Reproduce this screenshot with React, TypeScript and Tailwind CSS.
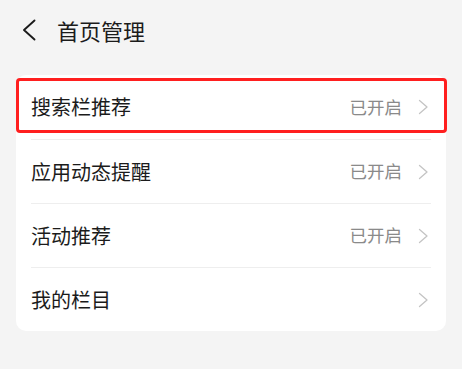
const items = [
  { label: "搜索栏推荐", status: "已开启", highlight: true },
  { label: "应用动态提醒", status: "已开启" },
  { label: "活动推荐", status: "已开启" },
  { label: "我的栏目", status: "" },
]

export default function App() {
  return (
    <div
      className="w-[462px] h-[369px] bg-[#f4f4f4] overflow-hidden"
      style={{ fontFamily: '"Noto Sans CJK SC", "Noto Sans", sans-serif' }}
    >
      <div className="flex items-center h-[60px] pl-[22px]">
        {/* back arrow */}
        <svg width="14" height="22" viewBox="0 0 14 22" fill="none" className="text-[#1b1b1b]">
          <path d="M12.5 1.5 2 11l10.5 9.5" stroke="currentColor" strokeWidth="1.9" strokeLinecap="round" strokeLinejoin="round" />
        </svg>
        <span className="ml-[21px] text-[22px] text-[#1b1b1b]">首页管理</span>
      </div>
      <div className="mx-[16px] mt-[15px] bg-white rounded-[10px]">
        {items.map((item, i) => (
          <div key={item.label} className="relative h-[64px] px-[15px]">
            {item.highlight && (
              <div className="absolute left-0 right-[-1px] top-[3px] bottom-[6px] border-[3px] border-[#ff1f1f] rounded-[4px]" />
            )}
            <div
              className={`flex items-center h-full ${i > 0 ? "border-t border-[#eeeeee]" : ""}`}
            >
              <span className="flex-1 text-[20px] text-[#1b1b1b]">{item.label}</span>
              {item.status && (
                <span className="text-[17.5px] text-[#8a8a8a] mr-[16px]">{item.status}</span>
              )}
              <svg width="11" height="16" viewBox="0 0 11 16" fill="none" className="text-[#c4c4c4] mr-[2px]">
                <path d="M1.5 1.5 9 8l-7.5 6.5" stroke="currentColor" strokeWidth="1.3" strokeLinecap="round" strokeLinejoin="round" />
              </svg>
            </div>
          </div>
        ))}
      </div>
    </div>
  )
}
